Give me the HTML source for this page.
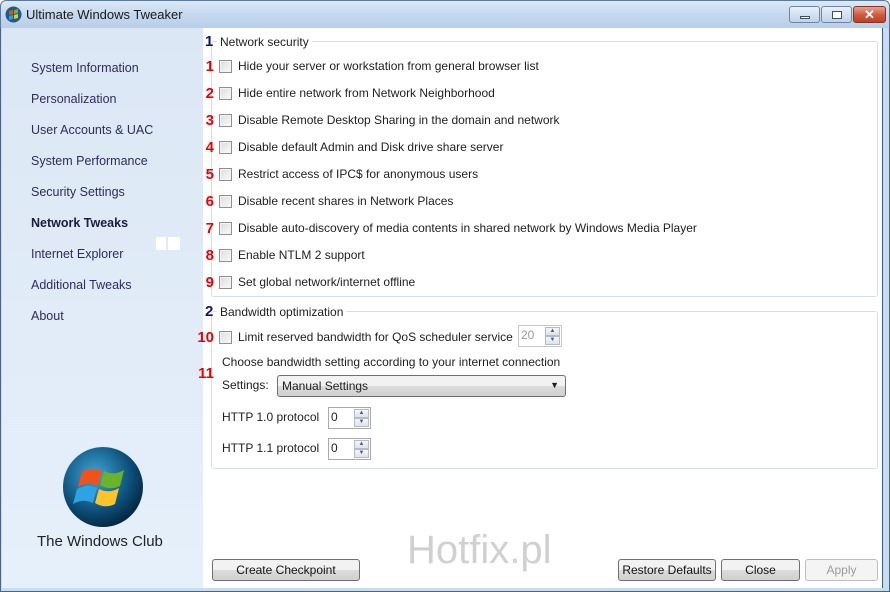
<!DOCTYPE html>
<html><head><meta charset="utf-8"><style>
*{margin:0;padding:0;box-sizing:border-box}
body{width:890px;height:592px;overflow:hidden;font-family:"Liberation Sans",sans-serif;font-size:12px;color:#1e1e1e;position:relative;background:#fff}
.abs{position:absolute}
#title{left:0;top:0;width:890px;height:28px;background:linear-gradient(#dce9f6,#c5d8ee 50%,#b9cfe8);border:1px solid #5d7a9c;border-bottom:none;border-radius:6px 6px 0 0}
#title .t{left:25px;top:6px;font-size:13px;color:#1a1a1a}
.frame{left:0;top:28px;width:890px;height:564px;border:1px solid #4b6582;border-top:none;background:#c8dcf0}
#side{left:2px;top:28px;width:201px;height:560px;background:linear-gradient(#dce7f5,#e6f0fb)}
#main{left:203px;top:28px;width:680px;height:560px;background:#fff;border-right:1px solid #3a5a80}
.nav{left:31px;font-size:12.5px;color:#302b5c}
.grp{border:1px solid #d5dfe5;border-radius:3px}
.gl{background:#fff;padding:0 3px;color:#1e1e1e}
.num{color:#e00;font-weight:bold;font-size:15px;text-align:right;width:22px}
.cb{width:13px;height:13px;border:1px solid #8f8f8f;background:linear-gradient(135deg,#dcdcdc,#fafafa);box-shadow:inset 0 0 0 1px #f4f4f4}
.lbl{color:#1e1e1e}
.btn{height:22px;border:1px solid #707070;border-radius:3px;background:linear-gradient(#f2f2f2 50%,#dcdcdc 50%,#cfcfcf);text-align:center;line-height:20px;color:#111}
.spin{border:1px solid #aaa;background:#fff;height:22px}
.arr{position:absolute;right:1px;width:15px;height:9px;border:1px solid #b5bcc8;background:linear-gradient(#f4f6f9,#dde3ea);font-size:6px;line-height:7px;text-align:center;color:#4a5d7d}
</style></head><body>
<div class="abs frame"></div>
<div id="title" class="abs">
 <svg class="abs" style="left:4px;top:5px" width="17" height="17" viewBox="0 0 17 17"><circle cx="8.5" cy="8.5" r="8" fill="#1c5b8a"/><path d="M4 5l4-1v4l-4 1z" fill="#f04a1c"/><path d="M9 4l4-1v4l-4 1z" fill="#6cb62c"/><path d="M4 10l4-1v4l-4 1z" fill="#2a9ee0"/><path d="M9 9l4-1v4l-4 1z" fill="#f7c21c"/></svg>
 <div class="abs t">Ultimate Windows Tweaker</div>
 <div class="abs" style="left:788px;top:5px;width:31px;height:17px;border:1px solid #6d86a5;border-radius:3px;background:linear-gradient(#e8f0f9,#c0d2e8)"><div class="abs" style="left:10px;top:9px;width:10px;height:3px;border:1px solid #3b4f6b;background:#fff"></div></div>
 <div class="abs" style="left:820px;top:5px;width:31px;height:17px;border:1px solid #6d86a5;border-radius:3px;background:linear-gradient(#e8f0f9,#c0d2e8)"><div class="abs" style="left:10px;top:4px;width:10px;height:8px;border:1px solid #3b4f6b;background:#fff"></div></div>
 <div class="abs" style="left:852px;top:5px;width:33px;height:17px;border:1px solid #7a3a2a;border-radius:3px;background:linear-gradient(#e8a090,#d0583a 55%,#c04020);color:#fff;font-weight:bold;text-align:center;line-height:15px;font-size:13px">✕</div>
</div>
<div id="side" class="abs"></div>
<div id="main" class="abs"></div>

<div class="abs nav" style="top:61px">System Information</div>
<div class="abs nav" style="top:92px">Personalization</div>
<div class="abs nav" style="top:123px">User Accounts &amp; UAC</div>
<div class="abs nav" style="top:154px">System Performance</div>
<div class="abs nav" style="top:185px">Security Settings</div>
<div class="abs nav" style="top:216px;font-weight:bold;color:#1c1c3c">Network Tweaks</div>
<div class="abs nav" style="top:247px">Internet Explorer</div>
<div class="abs nav" style="top:278px">Additional Tweaks</div>
<div class="abs nav" style="top:309px">About</div>
<div class="abs" style="left:156px;top:237px;width:10px;height:13px;background:#fff"></div>
<div class="abs" style="left:168px;top:237px;width:12px;height:13px;background:#fff"></div>

<svg class="abs" style="left:62px;top:446px" width="82" height="82" viewBox="0 0 82 82">
<defs><radialGradient id="g" cx="40%" cy="35%" r="65%"><stop offset="0" stop-color="#3fa6d8"/><stop offset="0.7" stop-color="#0c4e78"/><stop offset="1" stop-color="#062a45"/></radialGradient></defs>
<circle cx="41" cy="41" r="40" fill="url(#g)"/>
<path d="M20 26q10-6 20-1l-4 15q-10-5-20 1z" fill="#f0521c"/>
<path d="M42 25q10 5 20-1l-4 16q-10 5-20-1z" fill="#6ab42a"/>
<path d="M15 43q10-6 20-1l-4 15q-10-5-20 1z" fill="#2da3e3"/>
<path d="M37 43q10 5 20-1l-4 16q-10 5-20-1z" fill="#fbc42a"/>
</svg>
<div class="abs" style="left:37px;top:533px;font-size:15px;color:#222">The Windows Club</div>

<div class="abs grp" style="left:211px;top:41px;width:667px;height:256px"></div>
<div class="abs" style="left:205px;top:33px;font-weight:bold;font-size:15px;color:#0a1a6e">1</div>
<div class="abs gl" style="left:217px;top:35px">Network security</div>

<div class="abs grp" style="left:211px;top:311px;width:667px;height:158px"></div>
<div class="abs" style="left:205px;top:303px;font-weight:bold;font-size:15px;color:#0a1a6e">2</div>
<div class="abs gl" style="left:217px;top:305px">Bandwidth optimization</div>

<div class="abs num" style="left:192px;top:58px">1</div><div class="abs cb" style="left:219px;top:60px"></div><div class="abs lbl" style="left:238px;top:59px">Hide your server or workstation from general browser list</div>
<div class="abs num" style="left:192px;top:85px">2</div><div class="abs cb" style="left:219px;top:87px"></div><div class="abs lbl" style="left:238px;top:86px">Hide entire network from Network Neighborhood</div>
<div class="abs num" style="left:192px;top:112px">3</div><div class="abs cb" style="left:219px;top:114px"></div><div class="abs lbl" style="left:238px;top:113px">Disable Remote Desktop Sharing in the domain and network</div>
<div class="abs num" style="left:192px;top:139px">4</div><div class="abs cb" style="left:219px;top:141px"></div><div class="abs lbl" style="left:238px;top:140px">Disable default Admin and Disk drive share server</div>
<div class="abs num" style="left:192px;top:166px">5</div><div class="abs cb" style="left:219px;top:168px"></div><div class="abs lbl" style="left:238px;top:167px">Restrict access of IPC$ for anonymous users</div>
<div class="abs num" style="left:192px;top:193px">6</div><div class="abs cb" style="left:219px;top:195px"></div><div class="abs lbl" style="left:238px;top:194px">Disable recent shares in Network Places</div>
<div class="abs num" style="left:192px;top:220px">7</div><div class="abs cb" style="left:219px;top:222px"></div><div class="abs lbl" style="left:238px;top:221px">Disable auto-discovery of media contents in shared network by Windows Media Player</div>
<div class="abs num" style="left:192px;top:247px">8</div><div class="abs cb" style="left:219px;top:249px"></div><div class="abs lbl" style="left:238px;top:248px">Enable NTLM 2 support</div>
<div class="abs num" style="left:192px;top:274px">9</div><div class="abs cb" style="left:219px;top:276px"></div><div class="abs lbl" style="left:238px;top:275px">Set global network/internet offline</div>

<div class="abs num" style="left:192px;top:329px">10</div><div class="abs cb" style="left:219px;top:331px"></div><div class="abs lbl" style="left:238px;top:330px">Limit reserved bandwidth for QoS scheduler service</div>
<div class="abs spin" style="left:518px;top:325px;width:44px;border-color:#c8c8c8;color:#999;padding:2px 2px">20<div class="arr" style="top:1px">▲</div><div class="arr" style="top:10px">▼</div></div>
<div class="abs lbl" style="left:222px;top:355px">Choose bandwidth setting according to your internet connection</div>
<div class="abs num" style="left:192px;top:365px">11</div>
<div class="abs lbl" style="left:222px;top:378px">Settings:</div>
<div class="abs" style="left:277px;top:375px;width:289px;height:22px;border:1px solid #707070;border-radius:3px;background:linear-gradient(#f2f2f2 50%,#dcdcdc 50%,#cfcfcf);padding:3px 4px;color:#1e1e1e">Manual Settings<span class="abs" style="right:6px;top:4px;font-size:9px">▼</span></div>
<div class="abs lbl" style="left:222px;top:410px">HTTP 1.0 protocol</div>
<div class="abs spin" style="left:328px;top:407px;width:43px;padding:2px 2px">0<div class="arr" style="top:1px">▲</div><div class="arr" style="top:10px">▼</div></div>
<div class="abs lbl" style="left:222px;top:441px">HTTP 1.1 protocol</div>
<div class="abs spin" style="left:328px;top:438px;width:43px;padding:2px 2px">0<div class="arr" style="top:1px">▲</div><div class="arr" style="top:10px">▼</div></div>

<div class="abs" style="left:407px;top:528px;font-size:40px;color:#d0d0d0">Hotfix.pl</div>

<div class="abs btn" style="left:212px;top:559px;width:148px">Create Checkpoint</div>
<div class="abs btn" style="left:618px;top:559px;width:98px">Restore Defaults</div>
<div class="abs btn" style="left:721px;top:559px;width:79px">Close</div>
<div class="abs btn" style="left:805px;top:559px;width:73px;border-color:#bdbdbd;background:#f4f4f4;color:#9a9a9a">Apply</div>
</body></html>
